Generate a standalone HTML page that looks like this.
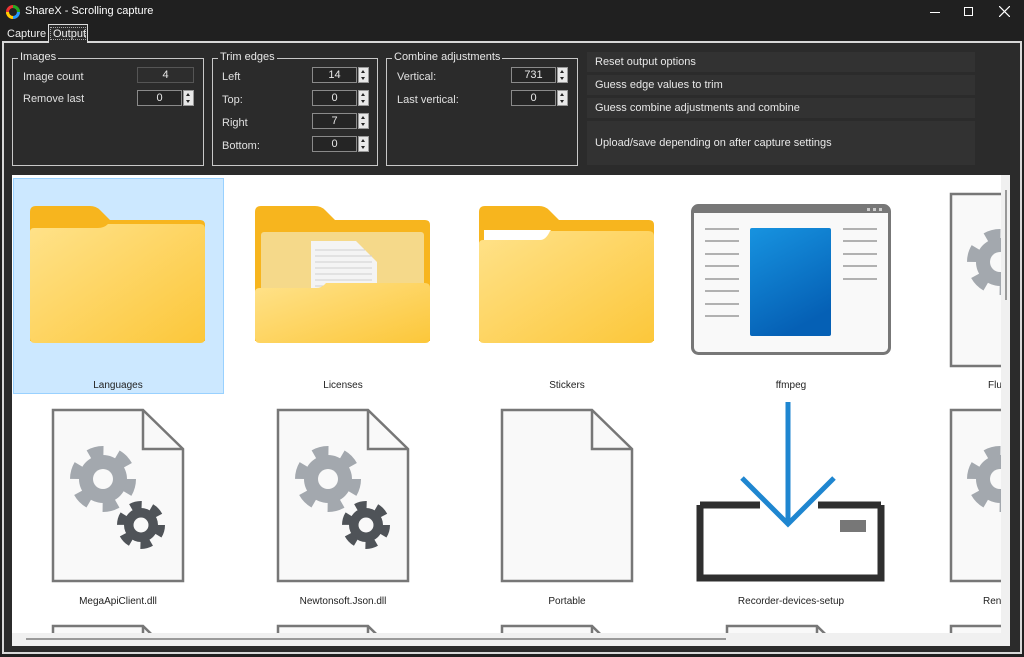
<!DOCTYPE html>
<html style="overflow:hidden"><head><meta charset="utf-8"><style>
*{margin:0;padding:0;box-sizing:border-box}
html,body{width:1024px;height:657px;overflow:hidden}
body{background:#202020;font-family:"Liberation Sans",sans-serif;font-size:11px;color:#e0e0e0;position:relative}
.a{position:absolute}
.gb{position:absolute;border:1px solid #c8c8c8}
.gb>.t{position:absolute;top:-8px;left:5px;background:#2b2b2b;padding:0 2px;color:#e8e8e8;font-size:11px}
.num{position:absolute;height:16px;border:1px solid #8a8a8a;background:#252525;color:#e8e8e8;text-align:center;font-size:11px;line-height:14px}
.sp{position:absolute;width:11px;height:16px;background:#e8e8e8;border:1px solid #999}
.sp:before{content:"";position:absolute;left:2px;top:2px;border:2px solid transparent;border-bottom:3px solid #222;border-top:0}
.sp:after{content:"";position:absolute;left:2px;bottom:2px;border:2px solid transparent;border-top:3px solid #222;border-bottom:0}
.btn{position:absolute;left:587px;width:388px;background:#323232;color:#e8e8e8;padding-left:8px;font-size:11px}
.lbl{position:absolute;font-size:11px;color:#e0e0e0}
.cap{position:absolute;font-size:10px;color:#222;text-align:center;width:200px}
</style></head><body>
<svg class="a" style="left:6px;top:5px" width="14" height="14" viewBox="0 0 14 14"><circle cx="7" cy="7" r="5.5" fill="none" stroke="#e33" stroke-width="3"/><path d="M7 1.5A5.5 5.5 0 0 1 12.5 7" stroke="#2a2" stroke-width="3" fill="none"/><path d="M12.5 7A5.5 5.5 0 0 1 7 12.5" stroke="#29f" stroke-width="3" fill="none"/><path d="M7 12.5A5.5 5.5 0 0 1 1.5 7" stroke="#fc0" stroke-width="3" fill="none"/></svg>
<div class="a" style="left:25px;top:5px;color:#fff;font-size:11px">ShareX - Scrolling capture</div>
<div class="a" style="left:930px;top:12px;width:10px;height:1px;background:#fff"></div>
<div class="a" style="left:964px;top:7px;width:9px;height:9px;border:1px solid #fff"></div>
<svg class="a" style="left:999px;top:6px" width="11" height="11"><path d="M0 0L11 11M11 0L0 11" stroke="#fff" stroke-width="1.2"/></svg>
<div class="a" style="left:3px;top:28px;width:45px;height:14px;color:#eee;padding-left:4px;font-size:11px">Capture</div>
<div class="a" style="left:48px;top:24px;width:40px;height:18px;background:#2b2b2b;border:1px solid #ddd;border-bottom:0"><div style="margin:2px 1px;border:1px dotted #aaa;color:#eee;font-size:11px;padding-left:2px;height:13px;line-height:12px">Output</div></div>
<div class="a" style="left:2px;top:41px;width:1020px;height:613px;border:2px solid #d8d8d8;background:#2b2b2b"></div>
<div class="a" style="left:49px;top:41px;width:38px;height:2px;background:#2b2b2b"></div>
<div class="gb" style="left:12px;top:58px;width:192px;height:108px"><span class="t">Images</span></div>
<div class="lbl" style="left:23px;top:71px">Image count</div>
<div class="num" style="left:137px;top:67px;width:57px;border-color:#555;background:#2d2d2d">4</div>
<div class="lbl" style="left:23px;top:93px">Remove last</div>
<div class="num" style="left:137px;top:90px;width:45px">0</div><div class="sp" style="left:183px;top:90px"></div>
<div class="gb" style="left:212px;top:58px;width:166px;height:108px"><span class="t">Trim edges</span></div>
<div class="lbl" style="left:222px;top:71px">Left</div><div class="num" style="left:312px;top:67px;width:45px">14</div><div class="sp" style="left:358px;top:67px"></div>
<div class="lbl" style="left:222px;top:94px">Top:</div><div class="num" style="left:312px;top:90px;width:45px">0</div><div class="sp" style="left:358px;top:90px"></div>
<div class="lbl" style="left:222px;top:117px">Right</div><div class="num" style="left:312px;top:113px;width:45px">7</div><div class="sp" style="left:358px;top:113px"></div>
<div class="lbl" style="left:222px;top:140px">Bottom:</div><div class="num" style="left:312px;top:136px;width:45px">0</div><div class="sp" style="left:358px;top:136px"></div>
<div class="gb" style="left:386px;top:58px;width:192px;height:108px"><span class="t">Combine adjustments</span></div>
<div class="lbl" style="left:397px;top:71px">Vertical:</div><div class="num" style="left:511px;top:67px;width:45px">731</div><div class="sp" style="left:557px;top:67px"></div>
<div class="lbl" style="left:397px;top:94px">Last vertical:</div><div class="num" style="left:511px;top:90px;width:45px">0</div><div class="sp" style="left:557px;top:90px"></div>
<div class="btn" style="top:52px;height:20px;line-height:20px">Reset output options</div>
<div class="btn" style="top:75px;height:20px;line-height:20px">Guess edge values to trim</div>
<div class="btn" style="top:98px;height:20px;line-height:20px">Guess combine adjustments and combine</div>
<div class="btn" style="top:121px;height:44px;line-height:44px">Upload/save depending on after capture settings</div>
<div class="a" style="left:12px;top:175px;width:998px;height:471px;background:#fff"></div>
<div class="a" style="left:1001px;top:175px;width:9px;height:458px;background:#f0f0f0"></div>
<div class="a" style="left:1005px;top:190px;width:2px;height:110px;background:#999"></div>
<div class="a" style="left:12px;top:633px;width:998px;height:13px;background:#f0f0f0"></div>
<div class="a" style="left:26px;top:638px;width:700px;height:2px;background:#999"></div>
<div class="a" style="left:13px;top:178px;width:211px;height:216px;background:#cce8ff;border:1px solid #99d1ff"></div>
<svg class="a" style="left:0;top:0" width="1024" height="657">
<defs>
<clipPath id="c"><rect x="12" y="175" width="989" height="458"/></clipPath>
<linearGradient id="fy" x1="0" y1="0" x2="1" y2="1"><stop offset="0" stop-color="#ffe28a"/><stop offset="1" stop-color="#fcc73a"/></linearGradient>
<linearGradient id="bl" x1="0" y1="0" x2="0.4" y2="1"><stop offset="0" stop-color="#1793e0"/><stop offset="1" stop-color="#0560b5"/></linearGradient>
<g id="fold"><path d="M0 6Q0 0 6 0H60Q66 0 70 4L80 14H170Q175 14 175 19V135H0Z" fill="#f7b51e"/></g>
<g id="gears">
<circle cx="0" cy="0" r="24" fill="#a3a8ae"/><circle cx="0" cy="0" r="28" fill="none" stroke="#a3a8ae" stroke-width="10" stroke-dasharray="15 14.3" stroke-linejoin="round"/><circle r="10" fill="#f9f9f9"/>
<circle cx="38" cy="46" r="17" fill="#4f5358"/><circle cx="38" cy="46" r="20" fill="none" stroke="#4f5358" stroke-width="8" stroke-dasharray="11 9.94"/><circle cx="38" cy="46" r="7.5" fill="#f9f9f9"/>
</g>
<g id="file"><path d="M0 0H90L130 39V171H0Z" fill="#f9f9f9" stroke="#777" stroke-width="2.5"/><path d="M90 0V39H130" fill="none" stroke="#777" stroke-width="2.5"/></g>
</defs>
<g clip-path="url(#c)">
<use href="#fold" x="30" y="206"/>
<path d="M35 230H100L108 236H200V240H35Z" fill="#fff"/>
<path d="M30 232Q30 228 34 228H98Q104 228 108 224H200Q205 224 205 229V338Q205 343 200 343H35Q30 343 30 338Z" fill="url(#fy)"/>
<use href="#fold" x="255" y="206"/>
<rect x="261" y="232" width="163" height="60" rx="3" fill="#f5d98a"/>
<path d="M311 241H356L377 262V290H311Z" fill="#f4f4f4"/>
<g stroke="#cfcfcf" stroke-width="1"><path d="M315 250H365M315 256H372M315 262H372M315 268H372M315 274H372M315 280H372M315 286H372"/></g>
<path d="M255 292Q255 288 260 288H316Q322 288 326 283H425Q430 283 430 288V338Q430 343 425 343H260Q255 343 255 338Z" fill="url(#fy)"/>
<use href="#fold" x="479" y="206"/>
<path d="M484 230H550L558 236H650V240H484Z" fill="#fff"/>
<path d="M479 244Q479 240 483 240H540Q546 240 550 231H648Q654 231 654 236V338Q654 343 649 343H484Q479 343 479 338Z" fill="url(#fy)"/>
<rect x="692.5" y="205.5" width="197" height="148" rx="6" fill="#f9f9f9" stroke="#777" stroke-width="3"/>
<path d="M692 212Q692 205 699 205H883Q890 205 890 212V213H692Z" fill="#777"/>
<g fill="#ccc"><rect x="867" y="208" width="3" height="3"/><rect x="873" y="208" width="3" height="3"/><rect x="879" y="208" width="3" height="3"/></g>
<rect x="750" y="228" width="81" height="108" rx="2" fill="url(#bl)"/>
<g stroke="#999" stroke-width="1.5"><path d="M705 229H739M705 241H739M705 254H739M705 266H739M705 279H739M705 291H739M705 304H739M705 316H739M843 229H877M843 241H877M843 254H877M843 266H877M843 279H877"/></g>
<rect x="951" y="194" width="60" height="172" fill="#f9f9f9" stroke="#777" stroke-width="2.5"/>
<use href="#gears" x="1000" y="262"/>
<use href="#file" x="53" y="410"/><use href="#gears" x="103" y="479"/>
<use href="#file" x="278" y="410"/><use href="#gears" x="328" y="479"/>
<use href="#file" x="502" y="410"/>
<path d="M700 505V578H881V505" fill="none" stroke="#2f2f2f" stroke-width="7"/>
<path d="M700 505H760M818 505H881" stroke="#2f2f2f" stroke-width="7"/>
<rect x="840" y="520" width="26" height="12" fill="#777"/>
<path d="M788 402V524M742 478L788 524L834 478" fill="none" stroke="#1f86d0" stroke-width="5"/>
<use href="#file" x="951" y="410"/><use href="#gears" x="1000" y="479"/>
<use href="#file" x="53" y="626"/><use href="#file" x="278" y="626"/><use href="#file" x="502" y="626"/><use href="#file" x="727" y="626"/><use href="#file" x="951" y="626"/>
</g>
</svg>
<div class="cap" style="left:18px;top:380px">Languages</div>
<div class="cap" style="left:243px;top:380px">Licenses</div>
<div class="cap" style="left:467px;top:380px">Stickers</div>
<div class="cap" style="left:691px;top:380px">ffmpeg</div>
<div class="cap" style="left:18px;top:596px">MegaApiClient.dll</div>
<div class="cap" style="left:243px;top:596px">Newtonsoft.Json.dll</div>
<div class="cap" style="left:467px;top:596px">Portable</div>
<div class="cap" style="left:691px;top:596px">Recorder-devices-setup</div>
<div class="a" style="left:988px;top:380px;font-size:10px;color:#222;width:13px;overflow:hidden;white-space:nowrap">Flu</div>
<div class="a" style="left:983px;top:596px;font-size:10px;color:#222;width:18px;overflow:hidden;white-space:nowrap">Ren</div>
</body></html>
